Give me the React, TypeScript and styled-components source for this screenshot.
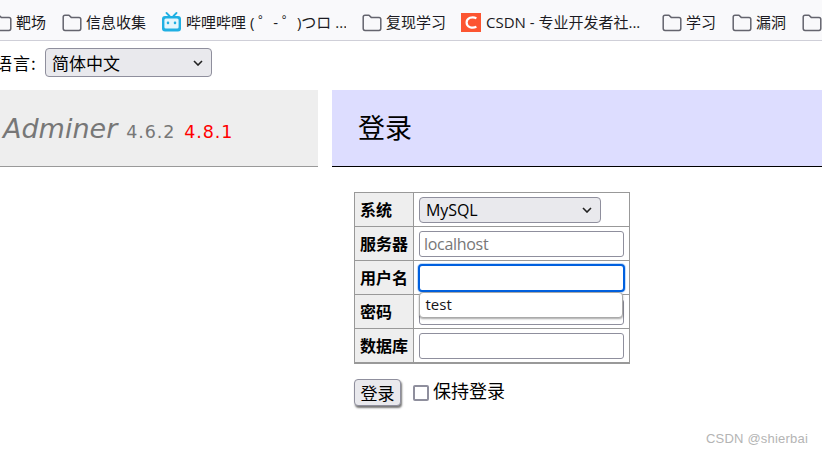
import styled, { createGlobalStyle } from "styled-components"

const Global = createGlobalStyle`
    html, body {
        margin: 0;
        padding: 0;
        background: #fff;
        overflow: hidden;
    }
    body {
        font-family: "Liberation Sans", "Noto Sans CJK SC", sans-serif;
    }
`

const bookmarks = [
    { label: "靶场", width: 30 },
    { label: "信息收集", width: 60 },
    { label: "哔哩哔哩 ( ゜- ゜)つロ ...", width: 160, icon: "bili" },
    { label: "复现学习", width: 59 },
    { label: "CSDN - 专业开发者社...", width: 160, icon: "csdn" },
    { label: "学习", width: 30 },
    { label: "漏洞", width: 30 },
    { label: "", width: 30 },
]

function FolderIcon() {
    return (
        <svg width="20" height="20" viewBox="0 0 20 20" fill="none">
            <path
                d="M1.2 5C1.2 3.9 2 3.2 3 3.2H7L9.2 5.4H17C18 5.4 18.8 6.2 18.8 7.2V16.6C18.8 17.7 18 18.4 17 18.4H3C2 18.4 1.2 17.7 1.2 16.6Z"
                stroke="#64646e"
                strokeWidth="1.5"
                strokeLinejoin="round"
            />
        </svg>
    )
}

function BiliIcon() {
    return (
        <svg width="20" height="20" viewBox="0 0 20 20" fill="none">
            <path d="M4.5 1L7.5 4M14.5 1L11.5 4" stroke="#20b0e3" strokeWidth="1.8" strokeLinecap="round" />
            <rect x="0" y="4" width="19" height="15.5" rx="3" fill="#20b0e3" />
            <rect x="2.4" y="6.6" width="14.2" height="10" rx="1.5" fill="#e4f6fc" />
            <rect x="4.8" y="9.4" width="2.4" height="2.8" rx="1" fill="#20b0e3" />
            <rect x="11.8" y="9.4" width="2.4" height="2.8" rx="1" fill="#20b0e3" />
        </svg>
    )
}

function CsdnIcon() {
    return (
        <svg width="21" height="20" viewBox="0 0 21 20">
            <rect y="1" width="20" height="19" fill="#fc5531" />
            <path d="M15.4 6.2C11.4 4.4 5.6 5.6 5.6 10.5C5.6 15.4 11.4 16.6 15.4 14.8" fill="none" stroke="#fff" strokeWidth="2.2" />
        </svg>
    )
}

function Chevron() {
    return (
        <svg width="10" height="6" viewBox="0 0 10 6" fill="none">
            <path d="M1 1L5 5L9 1" stroke="#222" strokeWidth="1.6" />
        </svg>
    )
}

export default function App() {
    return (
        <Page>
            <Global />
            <BookmarkBar>
                {bookmarks.map((b, i) => (
                    <Bookmark key={i}>
                        {b.icon === "bili" ? <BiliIcon /> : b.icon === "csdn" ? <CsdnIcon /> : <FolderIcon />}
                        <BookmarkLabel $width={b.width}>{b.label}</BookmarkLabel>
                    </Bookmark>
                ))}
            </BookmarkBar>

            <LangRow>
                <LangLabel>语言:</LangLabel>
                <LangSelect>
                    简体中文
                    <Chevron />
                </LangSelect>
            </LangRow>

            <Columns>
                <Menu>
                    <MenuHead>
                        <Brand>Adminer</Brand>
                        <Version>4.6.2</Version>
                        <NewVersion>4.8.1</NewVersion>
                    </MenuHead>
                </Menu>
                <Content>
                    <Heading>登录</Heading>
                    <FormArea>
                        <LoginTable>
                            <tbody>
                                <tr>
                                    <Th>系统</Th>
                                    <Td>
                                        <DriverSelect>
                                            MySQL
                                            <Chevron />
                                        </DriverSelect>
                                    </Td>
                                </tr>
                                <tr>
                                    <Th>服务器</Th>
                                    <Td>
                                        <Field placeholder="localhost" readOnly />
                                    </Td>
                                </tr>
                                <tr>
                                    <Th>用户名</Th>
                                    <Td>
                                        <FocusField readOnly />
                                    </Td>
                                </tr>
                                <tr>
                                    <Th>密码</Th>
                                    <Td>
                                        <Field readOnly />
                                    </Td>
                                </tr>
                                <tr>
                                    <Th>数据库</Th>
                                    <Td>
                                        <Field readOnly />
                                    </Td>
                                </tr>
                            </tbody>
                            <Suggest>test</Suggest>
                        </LoginTable>
                        <Actions>
                            <LoginButton>登录</LoginButton>
                            <Remember>
                                <Check />
                                保持登录
                            </Remember>
                        </Actions>
                    </FormArea>
                </Content>
            </Columns>
            <Watermark>CSDN @shierbai</Watermark>
        </Page>
    )
}

const Page = styled.div`
    position: relative;
    width: 822px;
    height: 454px;
    overflow: hidden;
    background: #fff;
`

const BookmarkBar = styled.div`
    display: flex;
    align-items: center;
    gap: 16px;
    box-sizing: border-box;
    height: 41px;
    padding-top: 4px;
    margin-left: -8px;
    width: 840px;
    background: #f9f9fb;
    border-bottom: 1px solid #cfcfd8;
    white-space: nowrap;
`

const Bookmark = styled.div`
    display: flex;
    align-items: center;
    gap: 4px;
    flex: none;
`

const BookmarkLabel = styled.span<{ $width: number }>`
    display: block;
    width: ${(p) => p.$width}px;
    font-family: "Open Sans", "Noto Sans CJK SC", sans-serif;
    font-size: 15px;
    line-height: 20px;
    color: #1c1b22;
    overflow: hidden;
`

const LangRow = styled.div`
    display: flex;
    align-items: center;
    gap: 8px;
    height: 29px;
    margin: 7px 0 0 -5px;
`

const LangLabel = styled.span`
    width: 42px;
    font-family: "Noto Sans CJK SC", sans-serif;
    font-size: 17px;
    letter-spacing: 1px;
    color: #000;
`

const selectBox = `
    display: flex;
    align-items: center;
    justify-content: space-between;
    box-sizing: border-box;
    background: #e9e9ed;
    border: 1px solid #8f8f9d;
    border-radius: 4px;
    color: #000;
`

const LangSelect = styled.div`
    ${selectBox}
    width: 167px;
    height: 29px;
    padding: 0 8px 0 6px;
    font-family: "Noto Sans CJK SC", sans-serif;
    font-size: 17px;
`

const Columns = styled.div`
    display: flex;
    gap: 14px;
    margin-top: 13px;
`

const Menu = styled.div`
    flex: none;
    width: 318px;
`

const MenuHead = styled.div`
    display: flex;
    align-items: baseline;
    box-sizing: border-box;
    height: 77px;
    padding: 23px 0 0 3px;
    background: #eee;
    border-bottom: 1px solid #999;
    font-family: "DejaVu Sans", sans-serif;
`

const Brand = styled.span`
    font-size: 27px;
    font-style: italic;
    color: #777;
`

const Version = styled.span`
    margin-left: 9px;
    font-size: 17.5px;
    letter-spacing: 0.9px;
    color: #777;
`

const NewVersion = styled(Version)`
    color: #f00;
`

const Content = styled.div`
    flex: 1;
    min-width: 0;
`

const Heading = styled.h2`
    box-sizing: border-box;
    height: 77px;
    margin: 0;
    padding: 0 0 0 26px;
    background: #ddf;
    border-bottom: 1px solid #000;
    font-family: "Noto Sans CJK SC", sans-serif;
    font-size: 27px;
    font-weight: 400;
    line-height: 74px;
    color: #000;
`

const FormArea = styled.div`
    padding: 25px 0 0 22px;
`

const LoginTable = styled.table`
    position: relative;
    box-sizing: border-box;
    width: 276px;
    height: 171px;
    border-collapse: collapse;
    border: 1px solid #999;
`

const Th = styled.th`
    box-sizing: border-box;
    width: 59px;
    height: 34px;
    padding: 0 0 2px 5px;
    background: #eee;
    border: 1px solid #999;
    font-family: "Noto Sans CJK SC", sans-serif;
    font-size: 16px;
    font-weight: 700;
    text-align: left;
    color: #000;
`

const Td = styled.td`
    box-sizing: border-box;
    height: 34px;
    padding: 0 5px;
    border: 1px solid #999;
`

const DriverSelect = styled.div`
    ${selectBox}
    width: 182px;
    height: 26px;
    padding: 0 8px 0 6px;
    font-family: "Open Sans", sans-serif;
    font-size: 16px;
    letter-spacing: -0.1px;
`

const Field = styled.input`
    display: block;
    box-sizing: border-box;
    width: 205px;
    height: 26px;
    padding: 0 4px;
    background: #fff;
    border: 1px solid #8f8f9d;
    border-radius: 3px;
    outline: none;
    font-family: "Open Sans", sans-serif;
    font-size: 16px;
    letter-spacing: -0.3px;
    &::placeholder {
        color: #777;
        opacity: 1;
    }
`

const FocusField = styled(Field)`
    width: 207px;
    height: 28px;
    margin: -1px;
    border: 2px solid #0060df;
    border-radius: 4px;
    box-shadow: 0 0 0 1px #c4dcf7;
`

const Suggest = styled.caption`
    position: absolute;
    top: 99px;
    left: 64px;
    box-sizing: border-box;
    width: 204px;
    height: 26px;
    padding: 0 0 0 6px;
    background: #fff;
    border: 1px solid #aaa;
    border-radius: 4px;
    box-shadow: 0 1px 2px rgba(0, 0, 0, 0.35);
    font-family: "Open Sans", sans-serif;
    font-size: 15px;
    line-height: 23px;
    text-align: left;
    color: #15141a;
`

const Actions = styled.div`
    display: flex;
    align-items: flex-start;
    gap: 12px;
    margin-top: 15px;
`

const LoginButton = styled.button`
    box-sizing: border-box;
    width: 47px;
    height: 27px;
    padding: 0;
    background: #e9e9ed;
    border: 1px solid #8f8f9d;
    border-radius: 4px;
    box-shadow: 1px 2px 2px #777;
    font-family: "Noto Sans CJK SC", sans-serif;
    font-size: 17px;
    color: #000;
`

const Remember = styled.label`
    display: flex;
    align-items: center;
    gap: 4px;
    height: 22px;
    font-family: "Noto Sans CJK SC", sans-serif;
    font-size: 18px;
    color: #000;
`

const Check = styled.span`
    display: block;
    box-sizing: border-box;
    width: 16px;
    height: 16px;
    margin-top: 6px;
    background: #fff;
    border: 2px solid #8f8f9d;
    border-radius: 2px;
`

const Watermark = styled.div`
    position: absolute;
    right: 14px;
    top: 431px;
    font-family: "Liberation Sans", sans-serif;
    font-size: 13px;
    letter-spacing: 0.2px;
    color: #b4b4b4;
`
